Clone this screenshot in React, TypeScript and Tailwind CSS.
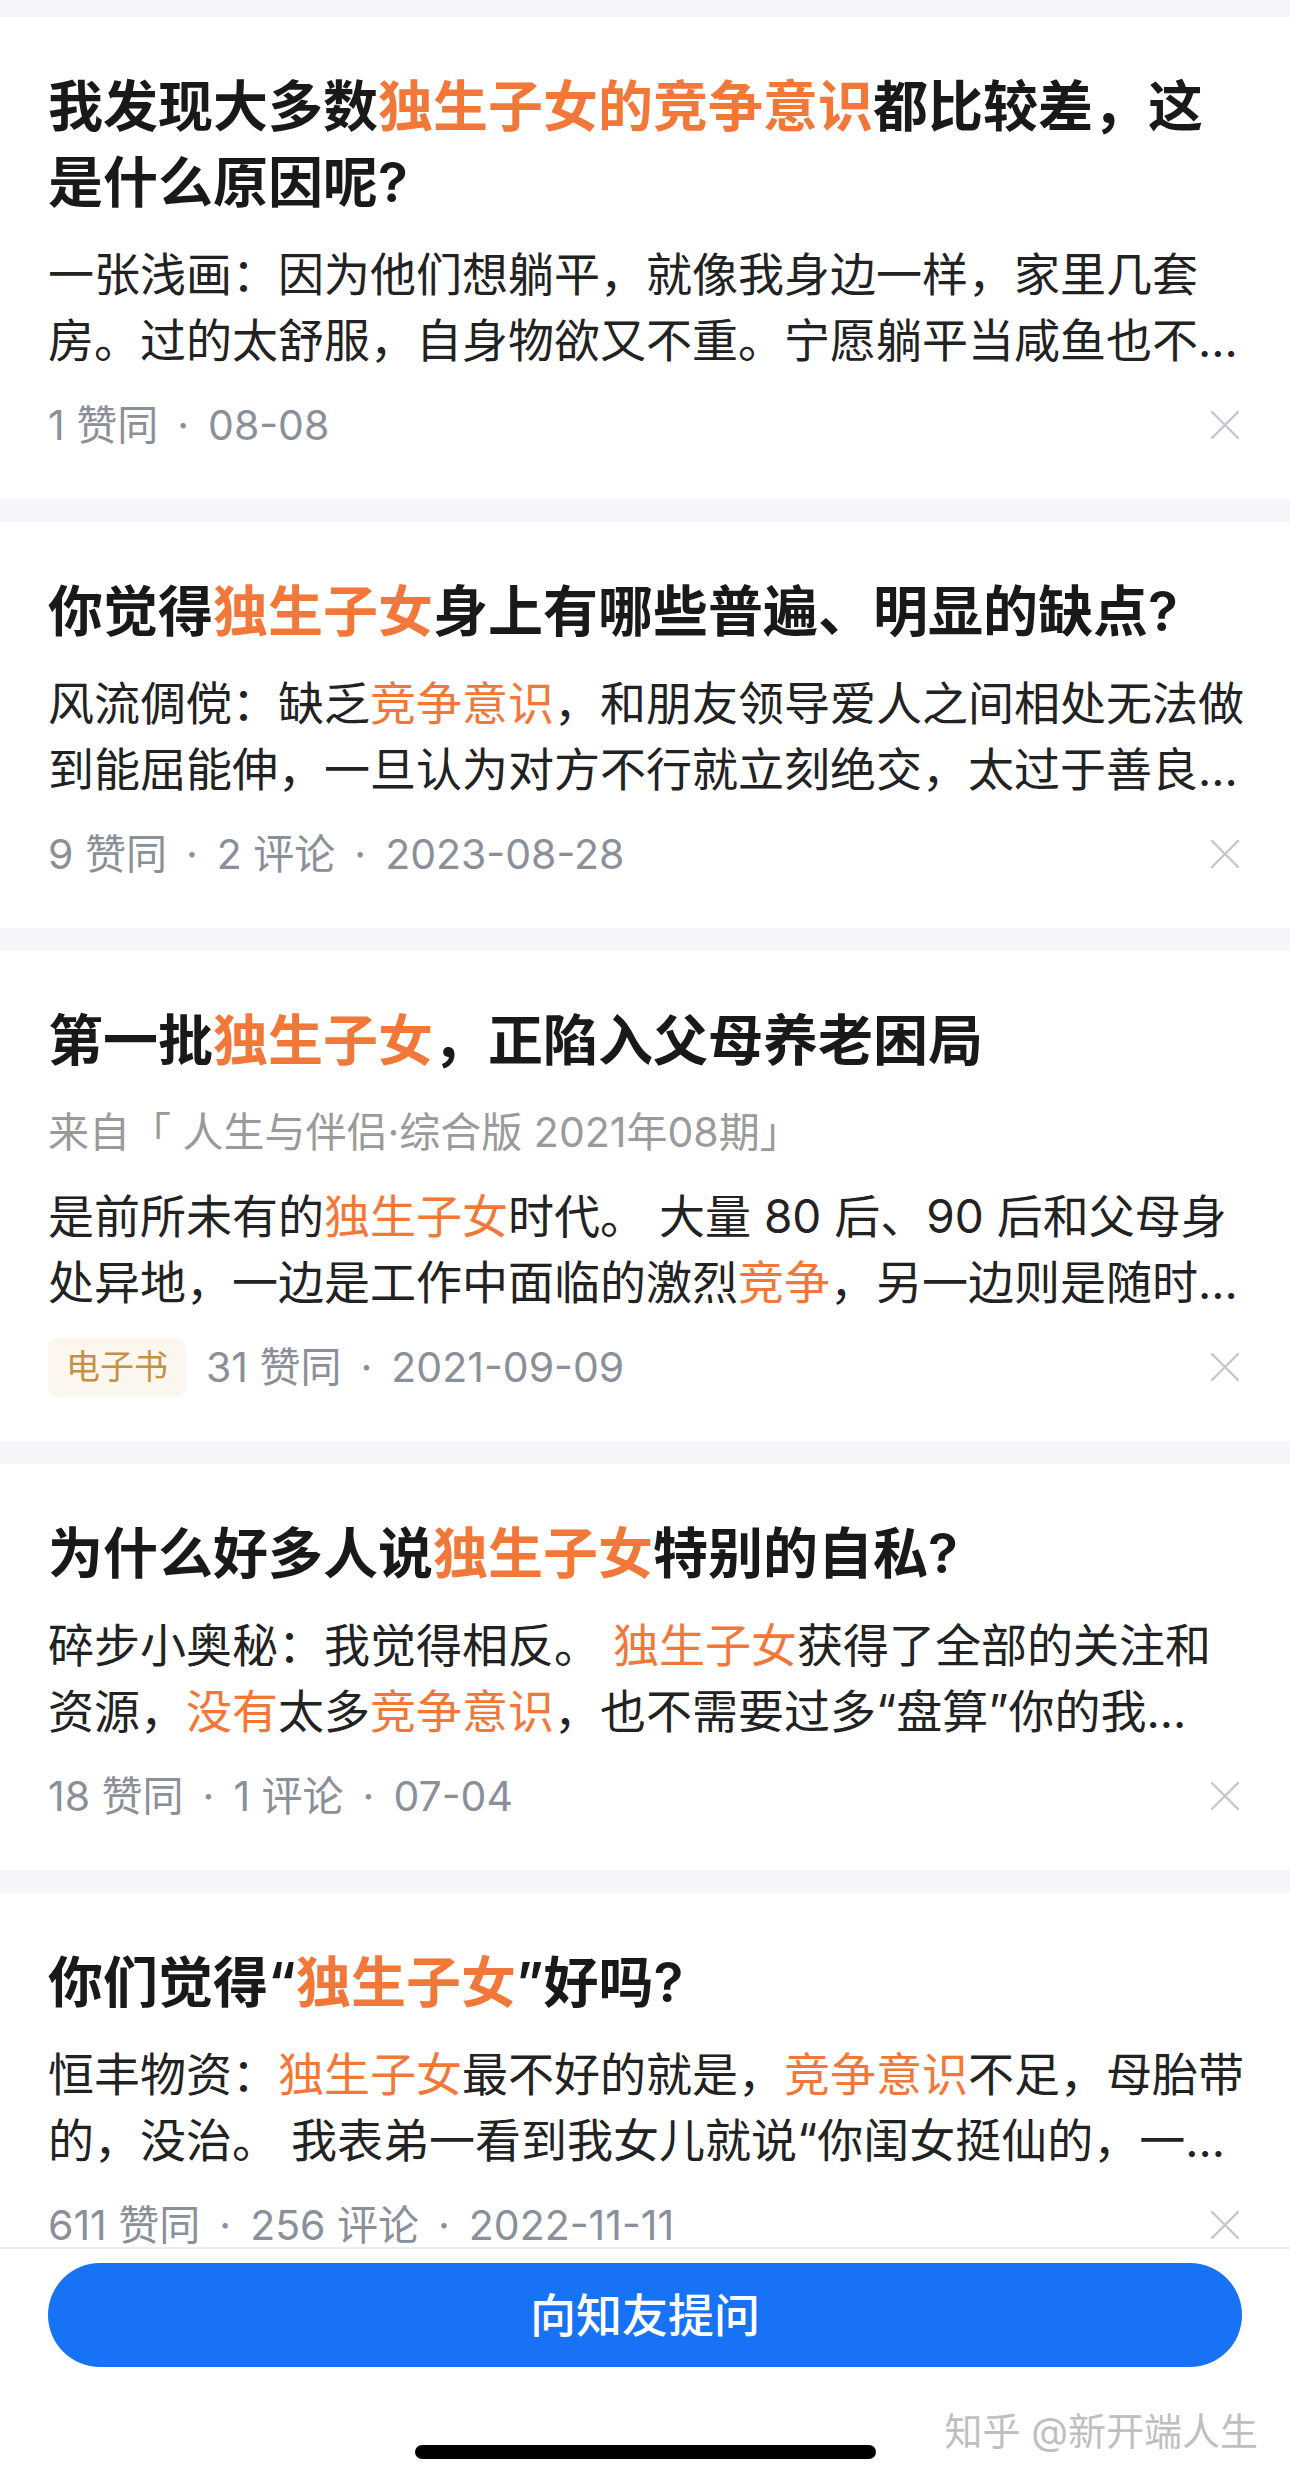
import { Fragment } from 'react';

type Item = {
  title: string;
  source?: string;
  lines: string[];
  badge?: string;
  meta: string[];
};

const items: Item[] = [
  {
    title: '我发现大多数[独生子女的竞争意识]都比较差，这是什么原因呢?',
    lines: ['一张浅画：因为他们想躺平，就像我身边一样，家里几套', '房。过的太舒服，自身物欲又不重。宁愿躺平当咸鱼也不…'],
    meta: ['1 赞同', '08-08'],
  },
  {
    title: '你觉得[独生子女]身上有哪些普遍、明显的缺点?',
    lines: ['风流倜傥：缺乏[竞争意识]，和朋友领导爱人之间相处无法做', '到能屈能伸，一旦认为对方不行就立刻绝交，太过于善良…'],
    meta: ['9 赞同', '2 评论', '2023-08-28'],
  },
  {
    title: '第一批[独生子女]，正陷入父母养老困局',
    source: '来自「 人生与伴侣·综合版 2021年08期」',
    lines: ['是前所未有的[独生子女]时代。 大量 80 后、90 后和父母身', '处异地，一边是工作中面临的激烈[竞争]，另一边则是随时…'],
    badge: '电子书',
    meta: ['31 赞同', '2021-09-09'],
  },
  {
    title: '为什么好多人说[独生子女]特别的自私?',
    lines: ['碎步小奥秘：我觉得相反。 [独生子女]获得了全部的关注和', '资源，[没有]太多[竞争意识]，也不需要过多“盘算”你的我…'],
    meta: ['18 赞同', '1 评论', '07-04'],
  },
  {
    title: '你们觉得“[独生子女]”好吗?',
    lines: ['恒丰物资：[独生子女]最不好的就是，[竞争意识]不足，母胎带', '的，没治。 我表弟一看到我女儿就说“你闺女挺仙的，一…'],
    meta: ['611 赞同', '256 评论', '2022-11-11'],
  },
];

// 把 [关键词] 标成橙色
function Hl({ text }: { text: string }) {
  return (
    <>
      {text.split(/(\[[^\]]+\])/).map((part, i) =>
        part.startsWith('[') ? (
          <span key={i} className="text-[#f2783a]">
            {part.slice(1, -1)}
          </span>
        ) : (
          <Fragment key={i}>{part}</Fragment>
        )
      )}
    </>
  );
}

function CloseIcon() {
  return (
    <svg width="34" height="34" viewBox="0 0 34 34" className="shrink-0">
      <path d="M4 4L30 30M30 4L4 30" stroke="#c3c6cc" strokeWidth="2.4" strokeLinecap="round" />
    </svg>
  );
}

function Card({ item }: { item: Item }) {
  return (
    <div className="bg-white px-[48px] pt-[51px] pb-[44px]">
      <h2 className="text-[55px] leading-[76px] font-semibold text-[#191919]">
        <Hl text={item.title} />
      </h2>
      {item.source && (
        <div className="mt-[24px] text-[41px] leading-[60px] text-[#9a9a9a] whitespace-nowrap">{item.source}</div>
      )}
      <div className="mt-[21px] text-[46px] leading-[66px] text-[#222222]">
        {item.lines.map((line, i) => (
          <div key={i} className="whitespace-nowrap">
            <Hl text={line} />
          </div>
        ))}
      </div>
      <div className="mt-[22px] h-[60px] flex items-center justify-between">
        <div className="flex items-center text-[41px] leading-none text-[#8a8f99] whitespace-nowrap">
          {item.badge && (
            <span className="mr-[20px] h-[59px] px-[18px] rounded-[10px] bg-[#fbf6ee] text-[34px] text-[#c69043] flex items-center">
              {item.badge}
            </span>
          )}
          {item.meta.map((m, i) => (
            <Fragment key={i}>
              {i > 0 && <span className="mx-[19px]">·</span>}
              <span>{m}</span>
            </Fragment>
          ))}
        </div>
        <CloseIcon />
      </div>
    </div>
  );
}

export default function App() {
  return (
    <div className="relative h-[2482px] overflow-hidden bg-[#f5f6fa] font-['Inter','Noto_Sans_CJK_SC',sans-serif]">
      <div className="pt-[17px] flex flex-col gap-[23px]">
        {items.map((item, i) => (
          <Card key={i} item={item} />
        ))}
      </div>

      {/* 底部提问栏 */}
      <div className="absolute inset-x-0 bottom-0 h-[235px] bg-white border-t-2 border-[#ececec]">
        <div className="px-[48px] pt-[14px]">
          <button className="w-full h-[104px] rounded-full bg-[#1772f6] text-white text-[46px] font-medium">
            向知友提问
          </button>
        </div>
        <div className="mt-[78px] mx-auto w-[461px] h-[14px] rounded-full bg-black" />
        <span className="absolute right-[32px] top-[163px] text-[38px] leading-none text-[#bfbfbf] whitespace-nowrap">
          知乎 @新开端人生
        </span>
      </div>
    </div>
  );
}
